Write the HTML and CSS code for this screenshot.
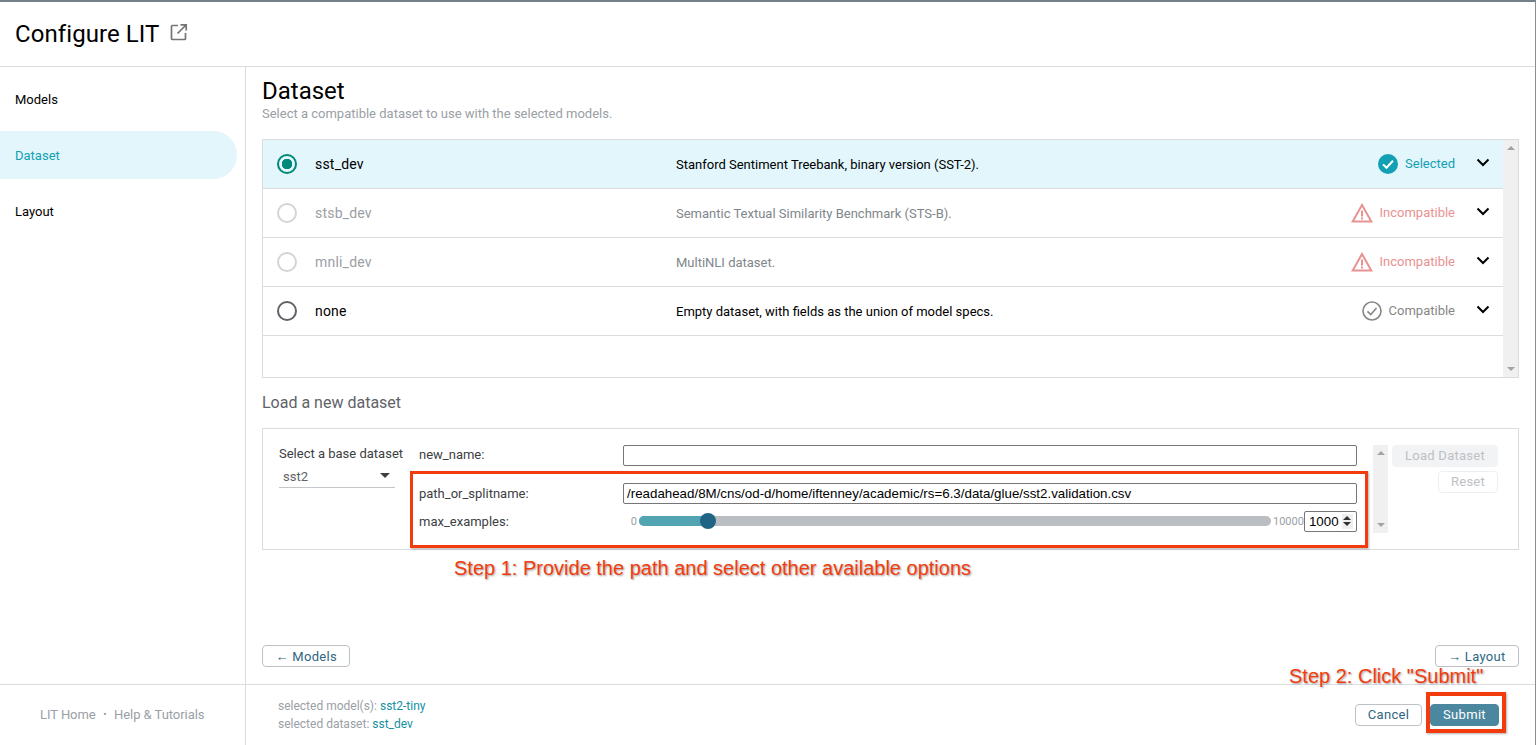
FILE: index.html
```html
<!DOCTYPE html>
<html lang="en">
<head>
<meta charset="utf-8">
<title>Configure LIT</title>
<link rel="stylesheet" href="styles.css">
</head>
<body>
<div class="page">
  <header class="top">
    <h1>Configure LIT</h1>
    <svg class="open-icon" width="20" height="20" viewBox="0 0 20 20"><path d="M9 3.500H3.500a1 1 0 0 0-1 1v12a1 1 0 0 0 1 1h12a1 1 0 0 0 1-1V11" fill="none" stroke="#757575" stroke-width="1.700"/><path d="M11.500 2.800h5.700v5.700M17 3 8.500 11.500" fill="none" stroke="#757575" stroke-width="1.700"/></svg>
  </header>
  <div class="middle">
    <nav class="side">
      <div class="side-item">Models</div>
      <div class="side-item active">Dataset</div>
      <div class="side-item">Layout</div>
    </nav>
    <main class="content">
      <h2>Dataset</h2>
      <p class="sub">Select a compatible dataset to use with the selected models.</p>
      <div class="table">
        <div class="rows">
          <div class="row selected">
            <span class="radio on"></span>
            <span class="name">sst_dev</span>
            <span class="desc">Stanford Sentiment Treebank, binary version (SST-2).</span>
            <span class="status s-sel">
              <svg width="20" height="20" viewBox="0 0 20 20"><circle cx="10" cy="10" r="10" fill="#14a0b4"/><path d="M5 10.400 8.500 13.800 15 6.800" fill="none" stroke="#fff" stroke-width="2"/></svg>
              <span class="st">Selected</span>
            </span>
            <svg class="chev" width="14" height="9" viewBox="0 0 14 9"><path d="M1.500 1.500 7 7l5.500-5.500" fill="none" stroke="#000" stroke-width="2"/></svg>
          </div>
          <div class="row off">
            <span class="radio"></span>
            <span class="name">stsb_dev</span>
            <span class="desc">Semantic Textual Similarity Benchmark (STS-B).</span>
            <span class="status s-bad">
              <svg width="22" height="20" viewBox="0 0 22 20"><path d="M11 2 20.300 18.500H1.700Z" fill="none" stroke="#e89292" stroke-width="2"/><path d="M11 7.500v6M11 14.500v2" stroke="#e89292" stroke-width="2"/></svg>
              <span class="st">Incompatible</span>
            </span>
            <svg class="chev" width="14" height="9" viewBox="0 0 14 9"><path d="M1.500 1.500 7 7l5.500-5.500" fill="none" stroke="#000" stroke-width="2"/></svg>
          </div>
          <div class="row off">
            <span class="radio"></span>
            <span class="name">mnli_dev</span>
            <span class="desc">MultiNLI dataset.</span>
            <span class="status s-bad">
              <svg width="22" height="20" viewBox="0 0 22 20"><path d="M11 2 20.300 18.500H1.700Z" fill="none" stroke="#e89292" stroke-width="2"/><path d="M11 7.500v6M11 14.500v2" stroke="#e89292" stroke-width="2"/></svg>
              <span class="st">Incompatible</span>
            </span>
            <svg class="chev" width="14" height="9" viewBox="0 0 14 9"><path d="M1.500 1.500 7 7l5.500-5.500" fill="none" stroke="#000" stroke-width="2"/></svg>
          </div>
          <div class="row">
            <span class="radio plain"></span>
            <span class="name">none</span>
            <span class="desc">Empty dataset, with fields as the union of model specs.</span>
            <span class="status s-ok">
              <svg width="20" height="20" viewBox="0 0 20 20"><circle cx="10" cy="10" r="9" fill="none" stroke="#868686" stroke-width="1.600"/><path d="M5.500 10.400 8.700 13.500 14.500 7" fill="none" stroke="#868686" stroke-width="1.600"/></svg>
              <span class="st">Compatible</span>
            </span>
            <svg class="chev" width="14" height="9" viewBox="0 0 14 9"><path d="M1.500 1.500 7 7l5.500-5.500" fill="none" stroke="#000" stroke-width="2"/></svg>
          </div>
        </div>
        <div class="scroll"><i class="up"></i><i class="down"></i></div>
      </div>
      <h3>Load a new dataset</h3>
      <div class="loader">
        <div class="base">
          <div class="base-label">Select a base dataset</div>
          <div class="base-select">sst2<i class="caret"></i></div>
        </div>
        <div class="fields">
          <div class="field f1">
            <label>new_name:</label>
            <div class="box"></div>
          </div>
          <div class="field f2">
            <label>path_or_splitname:</label>
            <div class="box">/readahead/8M/cns/od-d/home/iftenney/academic/rs=6.3/data/glue/sst2.validation.csv</div>
          </div>
          <div class="field f3">
            <label>max_examples:</label>
            <div class="slider">
              <span class="lim">0</span>
              <div class="track"><div class="fill"></div><div class="thumb"></div></div>
              <span class="lim">10000</span>
              <div class="num">1000<span class="spin"><i class="up"></i><i class="down"></i></span></div>
            </div>
          </div>
        </div>
        <div class="scroll small"><i class="up"></i><i class="down"></i></div>
        <div class="actions">
          <button class="btn-load">Load Dataset</button>
          <button class="btn-reset">Reset</button>
        </div>
      </div>
      <div class="nav-btns">
        <button class="btn">&#8592; Models</button>
        <button class="btn">&#8594; Layout</button>
      </div>
    </main>
  </div>
  <footer class="bottom">
    <div class="links">LIT Home<span class="dot">&#8226;</span>Help &amp; Tutorials</div>
    <div class="info">
      <div class="selected-info">
        <div>selected model(s): <a>sst2-tiny</a></div>
        <div>selected dataset: <a>sst_dev</a></div>
      </div>
      <div class="foot-btns">
        <button class="btn">Cancel</button>
        <button class="btn primary">Submit</button>
      </div>
    </div>
  </footer>

  <div class="mark mark-fields"></div>
  <div class="mark mark-submit"></div>
  <div class="note note-1">Step 1: Provide the path and select other available options</div>
  <div class="note note-2">Step 2: Click "Submit"</div>
</div>
</body>
</html>
```

FILE: styles.css
```css
* {
  box-sizing: border-box;
}
html, body {
  margin: 0;
  height: 100%;
  overflow: hidden;
}
body {
  font-family: Roboto, sans-serif;
  font-size: 13px;
  color: #000;
  background: #fff;
}
.page {
  position: relative;
  height: 745px;
  display: flex;
  flex-direction: column;
  border-top: 2px solid #75818a;
  border-right: 1px solid #8a8f94;
}
.top {
  height: 65px;
  flex: none;
  display: flex;
  align-items: center;
  padding-left: 15px;
  border-bottom: 1px solid #dadce0;
}
h1 {
  margin: 0;
  font-size: 24px;
  font-weight: 400;
  line-height: 32px;
  letter-spacing: 0.08px;
}
.open-icon {
  margin: -5px 0 0 9px;
}
.middle {
  flex: none;
  height: 617px;
  display: flex;
}
.side {
  width: 246px;
  flex: none;
  border-right: 1px solid #dadce0;
  padding: 8px 8px 0 0;
}
.side-item {
  height: 48px;
  margin-bottom: 8px;
  padding-left: 15px;
  line-height: 50px;
  border-radius: 0 24px 24px 0;
}
.side-item.active {
  background: #e2f6fb;
  color: #14a0b4;
}
.content {
  flex: 1;
  min-width: 0;
  padding: 11px 16px 0;
  position: relative;
}
h2 {
  margin: 0;
  font-size: 24px;
  font-weight: 400;
  line-height: 27px;
}
.sub {
  margin: 1px 0 0;
  line-height: 16px;
  color: #9aa0a6;
}
.table {
  display: flex;
  height: 239px;
  margin-top: 17px;
  border: 1px solid #dadce0;
}
.rows {
  flex: 1;
}
.row {
  height: 49px;
  display: flex;
  align-items: center;
  padding-left: 14px;
  border-bottom: 1px solid #dadce0;
}
.row.selected {
  background: #e2f6fb;
}
.row.off {
  color: #9aa0a6;
}
.row.off .desc {
  color: #80868b;
}
.radio {
  width: 20px;
  height: 20px;
  flex: none;
  border: 2px solid #d4d4d4;
  border-radius: 50%;
}
.radio.plain {
  border-color: #5f6368;
}
.radio.on {
  border-color: #00897b;
  background: radial-gradient(circle, #00897b 0 5px, transparent 5.500px);
}
.name {
  width: 379px;
  padding-left: 18px;
  font-size: 14px;
  letter-spacing: 0.2px;
  flex: none;
}
.desc {
  flex: 1;
}
.status {
  display: flex;
  align-items: center;
  gap: 7px;
  margin-right: 21px;
}
.st {
  margin-bottom: 2px;
}
.s-sel {
  color: #14a0b4;
}
.s-bad {
  color: #e89292;
}
.s-ok {
  color: #868686;
}
.chev {
  margin: -3px 13px 0 0;
}
.scroll {
  width: 15px;
  flex: none;
  background: #f0f0f0;
  display: flex;
  flex-direction: column;
  justify-content: space-between;
  align-items: center;
  padding: 6px 0;
}
.up, .down {
  display: block;
  width: 0;
  height: 0;
  border-left: 4px solid transparent;
  border-right: 4px solid transparent;
}
.up {
  border-bottom: 4px solid #a3a3a3;
}
.down {
  border-top: 4px solid #a3a3a3;
}
h3 {
  margin: 15px 0 0;
  font-size: 16px;
  font-weight: 400;
  line-height: 20px;
  color: #5f6368;
}
.loader {
  height: 122px;
  margin-top: 15px;
  border: 1px solid #dadce0;
  display: flex;
  align-items: flex-start;
  padding: 16px 20px 0 16px;
}
.base {
  width: 140px;
  flex: none;
}
.base-label {
  color: #3c4043;
  line-height: 18px;
}
.base-select {
  position: relative;
  width: 116px;
  height: 22px;
  margin-top: 3px;
  padding-left: 4px;
  line-height: 22px;
  color: #5f6368;
  border-bottom: 1px solid #c4c7ca;
}
.caret {
  position: absolute;
  right: 5px;
  top: 7px;
  border-left: 5px solid transparent;
  border-right: 5px solid transparent;
  border-top: 5px solid #3c4043;
}
.fields {
  width: 938px;
  flex: none;
  margin-top: -1px;
}
.field {
  height: 22px;
  display: flex;
  align-items: center;
}
.f1 label {
  margin-bottom: 2px;
}
.f2 {
  margin-top: 16px;
}
.f3 {
  margin-top: 6px;
}
.field label {
  width: 204px;
  flex: none;
  color: #3c4043;
}
.box {
  width: 734px;
  height: 21px;
  border: 1px solid #767676;
  border-radius: 2px;
  padding-left: 3px;
  line-height: 19px;
  font-family: "Liberation Sans", sans-serif;
  font-size: 13.333px;
}
.slider {
  flex: 1;
  display: flex;
  align-items: center;
}
.lim {
  width: 16px;
  flex: none;
  font-size: 11px;
  color: #9aa0a6;
  text-align: right;
  padding-right: 2px;
}
.lim:nth-child(3) {
  width: auto;
  padding: 0 0 0 2px;
}
.track {
  position: relative;
  width: 632px;
  height: 10px;
  border-radius: 5px;
  background: #babec2;
}
.fill {
  width: 70px;
  height: 10px;
  border-radius: 5px 0 0 5px;
  background: #53a4b2;
}
.thumb {
  position: absolute;
  left: 61px;
  top: -3px;
  width: 16px;
  height: 16px;
  border-radius: 50%;
  background: #1f6485;
}
.num {
  width: 53px;
  height: 21px;
  flex: none;
  border: 1px solid #767676;
  border-radius: 2px;
  display: flex;
  align-items: center;
  justify-content: space-between;
  padding: 0 3px 0 4px;
  font-family: "Liberation Sans", sans-serif;
  font-size: 13.333px;
}
.spin {
  width: 11px;
  height: 15px;
  background: #efefef;
  display: flex;
  flex-direction: column;
  align-items: center;
  justify-content: center;
  gap: 2px;
}
.spin .up {
  border-bottom-color: #333;
}
.spin .down {
  border-top-color: #333;
}
.scroll.small {
  height: 88px;
  margin-left: 16px;
  width: 15px;
}
.actions {
  display: flex;
  flex-direction: column;
  align-items: flex-end;
  gap: 4px;
  margin-left: 3px;
  width: 107px;
}
.btn-load, .btn-reset {
  font-family: Roboto, sans-serif;
  font-size: 13px;
  height: 22px;
  padding: 0 0 2px;
  color: #bdc1c6;
  border-radius: 4px;
  letter-spacing: 0.25px;
}
.btn-load {
  width: 106px;
  background: #f1f3f4;
  border: 0;
}
.btn-reset {
  width: 60px;
  background: #fff;
  border: 1px solid #eceef0;
}
.nav-btns {
  position: absolute;
  left: 16px;
  right: 16px;
  top: 578px;
  display: flex;
  justify-content: space-between;
}
.btn {
  height: 22px;
  padding: 0 12px;
  background: #fff;
  border: 1px solid #bdc1c6;
  border-radius: 4px;
  font-family: Roboto, sans-serif;
  font-size: 13px;
  letter-spacing: 0.3px;
  color: #2f6682;
}
.nav-btns .btn {
  padding: 0 12.500px;
}
.bottom {
  flex: 1;
  display: flex;
  border-top: 1px solid #dadce0;
}
.links {
  width: 246px;
  flex: none;
  border-right: 1px solid #dadce0;
  padding-left: 40px;
  line-height: 59px;
  letter-spacing: -0.05px;
  color: #9aa0a6;
}
.dot {
  margin: 0 7.500px;
  font-size: 10px;
  vertical-align: 1px;
}
.info {
  flex: 1;
  display: flex;
  align-items: center;
  justify-content: space-between;
  padding: 0 36px 0 32px;
}
.selected-info {
  font-size: 12px;
  line-height: 18px;
  color: #9aa0a6;
  margin-top: -1px;
}
.selected-info a {
  color: #14909f;
}
.foot-btns {
  display: flex;
  gap: 8px;
}
.foot-btns .btn {
  width: 67px;
  padding: 0 0 2px;
}
.foot-btns .primary {
  width: 69px;
  background: #4b879f;
  border-color: #4b879f;
  color: #fff;
}
.mark {
  position: absolute;
  border: 3px solid #f33c0d;
  box-shadow: 1px 1px 2px rgba(0, 0, 0, 0.3);
}
.mark-fields {
  left: 410px;
  top: 469px;
  width: 958px;
  height: 77px;
}
.mark-submit {
  left: 1426px;
  top: 690px;
  width: 80px;
  height: 41px;
  border-width: 4px;
}
.note {
  position: absolute;
  font-family: "Liberation Sans", sans-serif;
  font-size: 20px;
  line-height: 24px;
  color: #f33c0d;
  text-shadow: 1px 1px 2px rgba(0, 0, 0, 0.4);
  white-space: nowrap;
}
.note-1 {
  left: 454px;
  top: 554px;
}
.note-2 {
  left: 1289px;
  top: 662px;
}
```
